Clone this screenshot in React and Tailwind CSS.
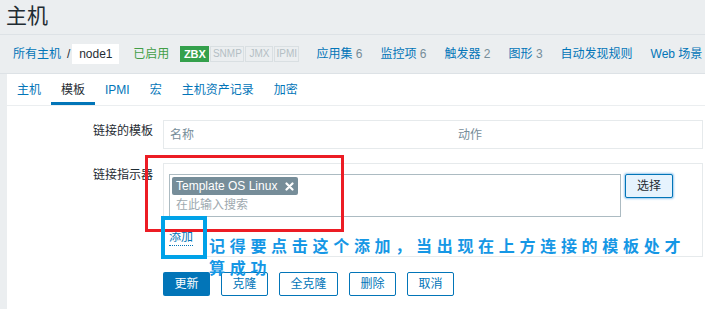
const tabs = ['主机', '模板', 'IPMI', '宏', '主机资产记录', '加密']

const navLinks = [
  ['应用集', '6'],
  ['监控项', '6'],
  ['触发器', '2'],
  ['图形', '3'],
  ['自动发现规则', null],
  ['Web 场景', null],
]

const buttons = [
  ['克隆', 'w-[47px]'],
  ['全克隆', 'w-[59px]'],
  ['删除', 'w-[47px]'],
  ['取消', 'w-[47px]'],
]

function CloseIcon() {
  return (
    <svg width="9" height="9" viewBox="0 0 9 9" className="ml-[8px]">
      <path d="M1.5 1.5 L7.5 7.5 M7.5 1.5 L1.5 7.5" stroke="#fff" strokeWidth="2.2" strokeLinecap="round" />
    </svg>
  )
}

export default function App() {
  return (
    <div className="relative w-[705px] h-[309px] overflow-hidden bg-[#ebeef0] text-[12px] text-[#1f2c33] font-['Liberation_Sans','Noto_Sans_CJK_SC',sans-serif]">
      {/* page title */}
      <div className="h-[35px] border-b border-[#dde2e6] pl-[6px] pt-[5px] text-[21px] leading-[21px]">主机</div>

      {/* breadcrumbs + host nav */}
      <div className="h-[39px] border-b border-[#dde2e6] flex items-center pl-[13px] whitespace-nowrap">
        <span className="text-[#0275b8]">所有主机</span>
        <span className="ml-[6px]">/</span>
        <span className="ml-[2px] h-[20px] w-[47px] bg-white flex items-center justify-center">node1</span>
        <span className="ml-[14px] text-[#429e47]">已启用</span>
        <div className="ml-[11px] flex gap-px h-[16px] leading-none">
          <span className="w-[29px] bg-[#34a04c] text-white text-[11px] font-bold flex items-center justify-center">ZBX</span>
          <span className="w-[34px] bg-[#ebeef0] border border-[#d9dfe2] text-[#b4bec4] text-[10px] flex items-center justify-center">SNMP</span>
          <span className="w-[28px] bg-[#ebeef0] border border-[#d9dfe2] text-[#b4bec4] text-[10px] flex items-center justify-center">JMX</span>
          <span className="w-[25px] bg-[#ebeef0] border border-[#d9dfe2] text-[#b4bec4] text-[10px] flex items-center justify-center">IPMI</span>
        </div>
        <div className="ml-[17px] flex gap-[18px]">
          {navLinks.map(([name, count]) => (
            <span key={name} className="text-[#0275b8]">
              {name}
              {count && <span className="text-[#768d99]"> {count}</span>}
            </span>
          ))}
        </div>
      </div>

      {/* main panel */}
      <div className="ml-[7px] h-[235px] bg-white">
        <div className="flex h-[32px] border-b border-[#ebeef0]">
          {tabs.map((t) =>
            t === '模板' ? (
              <span key={t} className="px-[10px] pt-[3px] flex items-center border-b-[3px] border-[#0275b8]">{t}</span>
            ) : (
              <span key={t} className="px-[10px] flex items-center text-[#0275b8]">{t}</span>
            )
          )}
        </div>

        <div className="pt-[14px]">
          <div className="flex">
            <div className="w-[146px] text-right pt-[3px] leading-[16px]">链接的模板</div>
            <div className="ml-[10px] w-[540px] h-[29px] border border-[#e6eaec] flex items-center text-[#768d99]">
              <span className="w-[294px] pl-[6px]">名称</span>
              <span>动作</span>
            </div>
          </div>

          <div className="flex mt-[14px]">
            <div className="w-[146px] text-right pt-[4px] leading-[16px]">链接指示器</div>
            <div className="ml-[10px] w-[540px] border border-[#e6eaec] pl-[5px] pt-[10px] pb-[10px]">
              <div className="flex items-start">
                <div className="w-[452px] h-[43px] border border-[#acbbc2] px-[2px] pt-[2px]">
                  <span className="inline-flex items-center h-[18px] bg-[#768d99] text-white rounded-[2px] pl-[4px] pr-[4px]">
                    Template OS Linux
                    <CloseIcon />
                  </span>
                  <div className="mt-[2px] h-[17px] leading-[17px] pl-[4px] text-[#9ea9af]">在此输入搜索</div>
                </div>
                <button className="ml-[4px] w-[48px] h-[24px] border border-[#0275b8] bg-[#e6f3fd] rounded-[2px] shadow-[0_0_2px_1px_#9ccaee] text-[#1f2c33]">
                  选择
                </button>
              </div>
              <span className="mt-[13px] inline-block leading-[14px] pb-[1px] border-b border-dotted border-[#0275b8] text-[#0275b8]">添加</span>
            </div>
          </div>

          <div className="flex gap-[11px] mt-[15px] ml-[156px]">
            <button className="w-[47px] h-[24px] rounded-[2px] bg-[#0275b8] text-white">更新</button>
            {buttons.map(([b, w]) => (
              <button key={b} className={`${w} h-[24px] rounded-[2px] border border-[#0275b8] bg-white text-[#0275b8]`}>
                {b}
              </button>
            ))}
          </div>
        </div>
      </div>

      {/* screenshot annotations */}
      <div className="absolute left-[145px] top-[155px] w-[199px] h-[77px] border-[3px] border-[#ec1c24]" />
      <div className="absolute left-[161px] top-[216px] w-[46px] h-[43px] border-[4px] border-[#00a2e8]" />
      <div className="absolute left-[209px] top-[234px] text-[16px] leading-[22px] tracking-[4.7px] font-bold text-[#1597e5] font-['Noto_Sans_CJK_SC',sans-serif] whitespace-nowrap">
        <div>记得要点击这个添加，当出现在上方连接的模板处才</div>
        <div>算成功</div>
      </div>
    </div>
  )
}
